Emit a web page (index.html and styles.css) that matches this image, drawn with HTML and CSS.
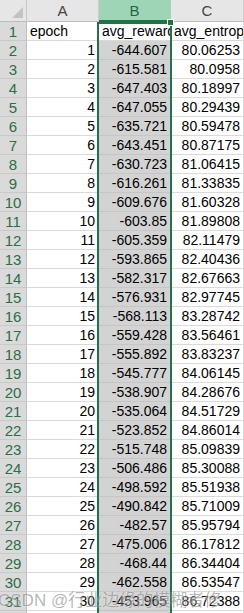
FILE: index.html
```html
<!DOCTYPE html>
<html>
<head>
<meta charset="utf-8">
<link rel="stylesheet" href="styles.css">
</head>
<body>
<div class="sheet">
  <div class="grid" id="grid">
    <div class="corner"><span class="tri"></span></div>
    <div class="colhead">A</div>
    <div class="colhead sel">B</div>
    <div class="colhead">C</div>
  </div>
  <div class="selbox"><span class="handle"></span></div>
  <div class="watermark">CSDN @行业边缘的模糊者修</div>
</div>
<script src="app.js"></script>
</body>
</html>
```
FILE: app.js
```js
const b=[-644.607,-615.581,-647.403,-647.055,-635.721,-643.451,-630.723,-616.261,-609.676,-603.85,-605.359,-593.865,-582.317,-576.931,-568.113,-559.428,-555.892,-545.777,-538.907,-535.064,-523.852,-515.748,-506.486,-498.592,-490.842,-482.57,-475.006,-468.44,-462.558,-453.965];
const c=["80.06253","80.0958","80.18997","80.29439","80.59478","80.87175","81.06415","81.33835","81.60328","81.89808","82.11479","82.40436","82.67663","82.97745","83.28742","83.56461","83.83237","84.06145","84.28676","84.51729","84.86014","85.09839","85.30088","85.51938","85.71009","85.95794","86.17812","86.34404","86.53547","86.72388"];
const g=document.getElementById('grid');
function cell(cls,txt){const d=document.createElement('div');d.className=cls;const s=document.createElement('span');s.textContent=txt;d.appendChild(s);g.appendChild(d);}
cell('rowhead','1');cell('cell txt','epoch');cell('cell txt active','avg_reward');cell('cell txt','avg_entropy');
for(let i=0;i<31;i++){
  if(i<30){cell('rowhead',String(i+2));cell('cell num',String(i+1));cell('cell num selcol',String(b[i]));cell('cell num',c[i]);}
  else{cell('rowhead','32');cell('cell','');cell('cell selcol','');cell('cell','');}
}
```
FILE: styles.css
```css
html,body{margin:0;padding:0;background:#fff;overflow:hidden;}
.sheet{position:relative;width:244px;height:613px;overflow:hidden;font-family:"Liberation Sans",Arial,sans-serif;}
.grid{display:grid;grid-template-columns:27px 72px 72px 73px;grid-template-rows:22px;grid-auto-rows:19px;width:244px;}
.corner{background:#e6e6e6;border-right:1px solid #c8c8c8;border-bottom:1px solid #bdbdbd;position:relative;box-sizing:border-box;}
.tri{position:absolute;right:3px;bottom:3px;width:0;height:0;border-left:11px solid transparent;border-bottom:11px solid #c2c2c2;}
.colhead{background:#e6e6e6;border-right:1px solid #cfcfcf;border-bottom:1px solid #bdbdbd;box-sizing:border-box;text-align:center;font-size:15px;line-height:22px;color:#444;}
.colhead.sel{background:#9fd5b7;color:#1c6a3f;border-bottom:2px solid #217346;border-right-color:#9fd5b7;}
.rowhead{background:#dadada;border-right:1px solid #bfbfbf;border-bottom:1px solid #c9c9c9;box-sizing:border-box;text-align:center;font-size:15px;line-height:19px;color:#2b6e48;}
.cell{border-right:1px solid #dadada;border-bottom:1px solid #dadada;box-sizing:border-box;font-size:14px;line-height:19px;color:#000;overflow:hidden;white-space:nowrap;}
.cell span{display:block;}
.cell.txt{padding-left:3px;}
.cell.num{text-align:right;padding-right:3px;}
.cell.selcol{background:#d3d3d3;border-bottom-color:#c6c6c6;border-right-color:#d3d3d3;}
.cell.active{background:#fff;}
.selbox{position:absolute;left:97px;top:22px;width:75px;height:600px;border:2px solid #217346;box-sizing:border-box;border-bottom:none;}
.handle{position:absolute;right:-4px;top:-5px;width:5px;height:5px;background:#217346;border:1px solid #fff;}
.watermark{position:absolute;left:-2px;top:586px;font-family:"Liberation Sans","Noto Sans CJK SC",sans-serif;font-size:17px;color:rgba(90,90,90,0.45);white-space:nowrap;text-shadow:0 0 2px rgba(255,255,255,0.7);}
```
